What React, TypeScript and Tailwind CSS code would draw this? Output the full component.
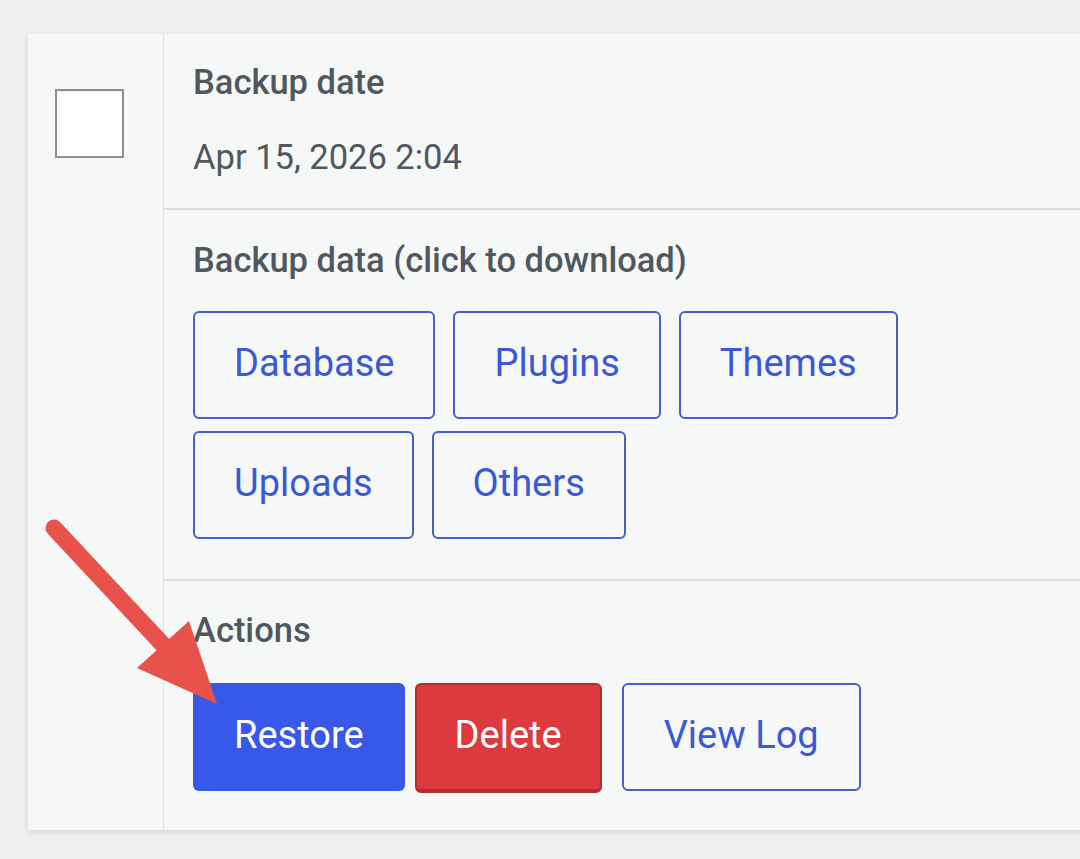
const downloads = [
  ['Database', 'Plugins', 'Themes'],
  ['Uploads', 'Others'],
];

function OutlineButton({ label }: { label: string }) {
  return (
    <button className="h-[108px] px-[39px] pb-[5px] rounded-[6px] border-2 border-[#4161c8] text-[#3a59d6] text-[38px] leading-none bg-transparent">
      {label}
    </button>
  );
}

function Arrow() {
  return (
    <svg className="absolute left-0 top-0 pointer-events-none" width="300" height="859" viewBox="0 0 300 859">
      <line x1="54" y1="528" x2="166" y2="648" stroke="#e8524a" strokeWidth="17" strokeLinecap="round" />
      <polygon points="137,668 189,621 217,704" fill="#e8524a" />
    </svg>
  );
}

export default function App() {
  return (
    <div className="relative w-[1080px] h-[859px] overflow-hidden bg-[#f0f0f1] pt-[34px] pl-[28px] font-['Roboto',sans-serif] text-[#50575e]">
      <div className="flex w-[1100px] bg-[#f6f7f7] shadow-[0_2px_6px_rgba(0,0,0,0.12)]">
        {/* select column */}
        <div className="w-[136px] shrink-0 border-r border-[#e0e0e0]">
          <div className="mt-[55px] ml-[27px] w-[69px] h-[69px] border-2 border-[#8c8f94] bg-white shadow-[inset_0_1px_2px_rgba(0,0,0,0.1)]" />
        </div>

        <div className="flex-1">
          <div className="pl-[29px] pt-[26px] pb-[29px] border-b-2 border-[#dcdcde]">
            <div className="text-[34.5px] leading-[44px] font-medium">Backup date</div>
            <div className="mt-[31px] text-[34.5px] leading-[44px]">Apr 15, 2026 2:04</div>
          </div>

          <div className="pl-[29px] pt-[28px] pb-[40px] border-b-2 border-[#dcdcde]">
            <div className="text-[34.5px] leading-[44px] font-medium">Backup data (click to download)</div>
            <div className="mt-[29px] flex flex-col gap-[12px]">
              {downloads.map((row, i) => (
                <div key={i} className="flex gap-[18px]">
                  {row.map((label) => (
                    <OutlineButton key={label} label={label} />
                  ))}
                </div>
              ))}
            </div>
          </div>

          <div className="pl-[29px] pt-[27px] pb-[37px]">
            <div className="text-[34.5px] leading-[44px] font-medium">Actions</div>
            <div className="mt-[31px] flex items-start">
              <button className="h-[108px] px-[41px] pb-[5px] rounded-[6px] bg-[#3858e9] text-white text-[38px] leading-none">
                Restore
              </button>
              <button className="ml-[10px] h-[110px] px-[38px] pb-[5px] rounded-[6px] border-2 border-b-4 border-[#b32d2e] bg-[#dc3a3c] text-white text-[38px] leading-none">
                Delete
              </button>
              <button className="ml-[20px] h-[108px] px-[40px] pb-[5px] rounded-[6px] border-2 border-[#4161c8] text-[#3a59d6] text-[38px] leading-none">
                View Log
              </button>
            </div>
          </div>
        </div>
      </div>
      <Arrow />
    </div>
  );
}
